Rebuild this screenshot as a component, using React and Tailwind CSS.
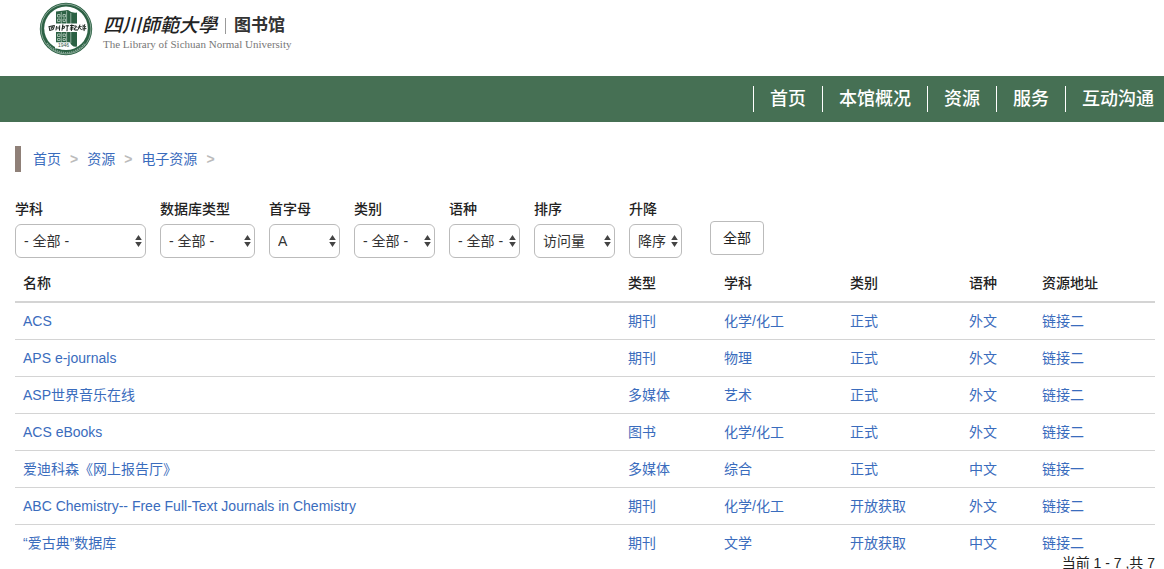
const FONT = "font-['Liberation_Sans','Noto_Sans_CJK_SC',sans-serif]";

const NAV = ["首页", "本馆概况", "资源", "服务", "互动沟通"];
const CRUMBS = ["首页", "资源", "电子资源"];

const FILTERS = [
  { id: "subject", label: "学科", value: "- 全部 -", width: "w-[131px]" },
  { id: "dbtype", label: "数据库类型", value: "- 全部 -", width: "w-[95px]" },
  { id: "initial", label: "首字母", value: "A", width: "w-[71px]" },
  { id: "category", label: "类别", value: "- 全部 -", width: "w-[81px]" },
  { id: "language", label: "语种", value: "- 全部 -", width: "w-[71px]" },
  { id: "sort", label: "排序", value: "访问量", width: "w-[81px]" },
  { id: "order", label: "升降", value: "降序", width: "w-[53px]" },
];

const COLUMNS = [
  { title: "名称", width: "" },
  { title: "类型", width: "w-24" },
  { title: "学科", width: "w-[126px]" },
  { title: "类别", width: "w-[119px]" },
  { title: "语种", width: "w-[73px]" },
  { title: "资源地址", width: "w-[121px]" },
];

const ROWS = [
  ["ACS", "期刊", "化学/化工", "正式", "外文", "链接二"],
  ["APS e-journals", "期刊", "物理", "正式", "外文", "链接二"],
  ["ASP世界音乐在线", "多媒体", "艺术", "正式", "外文", "链接二"],
  ["ACS eBooks", "图书", "化学/化工", "正式", "外文", "链接二"],
  ["爱迪科森《网上报告厅》", "多媒体", "综合", "正式", "中文", "链接一"],
  ["ABC Chemistry-- Free Full-Text Journals in Chemistry", "期刊", "化学/化工", "开放获取", "外文", "链接二"],
  ["“爱古典”数据库", "期刊", "文学", "开放获取", "中文", "链接二"],
];

function Emblem() {
  return (
    <svg className="size-[54px] shrink-0" viewBox="0 0 54 54" aria-hidden="true">
      <circle cx="27" cy="27" r="26.2" fill="#2c6144" />
      <circle cx="27" cy="27" r="24.9" fill="none" stroke="#c3d4ca" strokeWidth=".6" />
      <circle cx="27" cy="26.3" r="21.8" fill="#fff" />
      <path d="M8 41A23.400 23.400 0 0 0 46 41" fill="none" stroke="#86a896" strokeWidth="1.600" strokeDasharray="1.300 .8" />
      <path d="M17 9.500l12-1.500q4 3.500 9 2.500v34q-5 1-7-4H17z" fill="#2c6144" />
      <path d="M27.600 9v31M31.800 11v30M22.300 10v30" fill="none" stroke="#bcd0c4" strokeWidth=".7" />
      <g fill="none" stroke="#bcd0c4" strokeWidth=".8">
        <path d="M18.500 12.500h2.600v2.500h-2.600zM18.500 17h2.600v2.500h-2.600zM24 12.500h2.400v2.500H24zM24 17h2.400v2.500H24zM18.500 32h2.600v2.500h-2.600zM18.500 36.500h2.600v2h-2.600zM24 32h2.400v2.500H24zM24 36.500h2.400v2H24z" />
      </g>
      <rect x="8" y="21.500" width="38.500" height="8.500" fill="#fff" />
      <g fill="none" stroke="#17221c" strokeWidth="1" strokeLinecap="round" strokeLinejoin="round">
        <path d="M10 24.500l.8 4M10.500 24.500l5-1-1.200 4-3.200.8M12.300 25v1.800M13.700 24.500v1.500" />
        <path d="M17.500 24.500l-.5 3.500M19 25v1.800M20.700 23.800l-.2 4.500" />
        <path d="M23.800 22.800l-.8 5.500M23.500 24.300h2l-.3 2h-2M27 23.800h2.800M28.300 23.800l-.3 5" />
        <path d="M31.500 23.500h3M31.700 25.300h2.500M31.200 27h3M32.800 22.800l-.4 5.800M35.500 24h1.800l-.4 1.800-1.400.3.200 2 2.200-.2" />
        <path d="M39 25.200l3.200-.6M40.800 23l-.6 2.600-1.800 2.700M40.600 25.800l1.900 2" />
        <path d="M44 23.200l.3.800M45.700 22.600l-.3 1M43.600 25l3-.5-1.500 1.600v2.600M43.600 27l3.400-.4" />
      </g>
      <path d="M16 40.500h14.500l1.500 6H16z" fill="#fff" />
      <text x="24.500" y="45" textAnchor="middle" fill="#2f5543" fontSize="5" fontFamily="Liberation Sans">1946</text>
    </svg>
  );
}

function Arrows() {
  return (
    <svg className="pointer-events-none absolute right-1 top-1/2 h-3 w-[7px] -translate-y-1/2" viewBox="0 0 7 12" fill="#444" aria-hidden="true">
      <path d="M3.500 0L6.800 5H.2zM3.500 12L.2 7h6.600z" />
    </svg>
  );
}

export default function App() {
  return (
    <div className={`${FONT} bg-white text-sm text-[#222]`}>
      <header>
        <a href="#" className="flex h-[76px] items-start gap-2.5 pl-[39px] pt-0.5">
          <Emblem />
          <span className="flex flex-col pt-2.5">
            <span className="flex items-center">
              <span className="text-[19px]/7 font-medium italic text-[#222]">四川師範大學</span>
              <span className="ml-2 mr-2 h-4 w-px bg-[#999]" />
              <span className="text-[17px]/7 font-bold text-[#333]">图书馆</span>
            </span>
            <span className="-mt-0.5 font-['Liberation_Serif',serif] text-[11px]/3 text-[#777]">
              The Library of Sichuan Normal University
            </span>
          </span>
        </a>
        <nav className="flex h-[46px] items-center justify-end bg-[#467054] pr-2.5">
          <ul className="flex">
            {NAV.map((item) => (
              <li key={item} className="border-l border-white pl-4 pr-4 last:pr-0">
                <a href="#" className="block text-lg/[26px] font-medium text-white">{item}</a>
              </li>
            ))}
          </ul>
        </nav>
      </header>

      <main className="pl-[15px] pr-[9px] pt-6">
        <nav className="flex h-[26px] items-center border-l-6 border-[#8f8078] pl-3">
          {CRUMBS.map((item) => (
            <span key={item} className="flex items-center">
              <a href="#" className="text-[#3a6cbd]">{item}</a>
              <span className="mx-[9px] font-bold text-[#bbb]">&gt;</span>
            </span>
          ))}
        </nav>

        <form className="mt-[27px] flex items-start gap-3.5">
          {FILTERS.map((f) => (
            <div key={f.id} className={f.width}>
              <label htmlFor={f.id} className="block whitespace-nowrap text-sm/5 font-medium">{f.label}</label>
              <div className="relative mt-[5px]">
                <select id={f.id} className="block h-[34px] w-full appearance-none rounded-md border border-[#bbb] bg-white pl-2 text-sm text-[#333]">
                  <option>{f.value}</option>
                </select>
                <Arrows />
              </div>
            </div>
          ))}
          <button type="button" className="ml-3.5 mt-[22px] h-[34px] rounded border border-[#bbb] bg-white px-3 text-[#222]">
            全部
          </button>
        </form>

        <table className="mt-[7px] w-full table-fixed border-collapse text-left">
          <thead>
            <tr className="border-b-2 border-[#d4d4d4]">
              {COLUMNS.map((c) => (
                <th key={c.title} className={`${c.width} px-2 py-2 text-sm/5 font-medium`}>{c.title}</th>
              ))}
            </tr>
          </thead>
          <tbody>
            {ROWS.map((row) => (
              <tr key={row[0]} className="border-b border-[#d4d4d4] last:border-b-0">
                {row.map((cell, i) => (
                  <td key={i} className="px-2 py-2 text-sm/5">
                    <a href="#" className="text-[#3a6cbd]">{cell}</a>
                  </td>
                ))}
              </tr>
            ))}
          </tbody>
        </table>
        <p className="-mt-1 text-right text-sm/3">当前 1 - 7 ,共 7</p>
      </main>
    </div>
  );
}
